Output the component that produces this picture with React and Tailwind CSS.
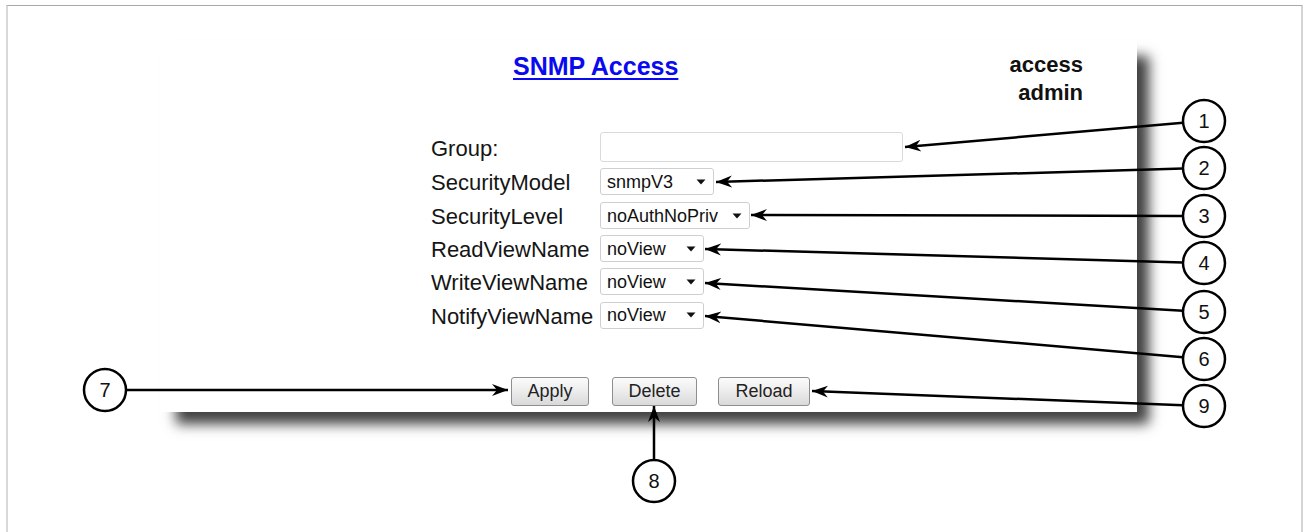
import React from "react";

const font = { fontFamily: '"Liberation Sans", Arial, sans-serif' };

function Select({ value, width }) {
  return (
    <div
      className={`flex items-center justify-between h-[27px] border border-[#cfcfcf] rounded-[3px] bg-white pl-[6px] pr-[6px] text-[18px] text-[#111] ${width}`}
    >
      <span className="leading-none">{value}</span>
      <svg width="10" height="6" viewBox="0 0 10 6" className="mr-[1px]">
        <path d="M0.5 0.5 L9.5 0.5 L5 5.5 Z" fill="#111" />
      </svg>
    </div>
  );
}

function Row({ label, h, children }) {
  return (
    <div className={`flex items-center ${h}`}>
      <div className="w-[169px] pt-[3px] text-[22px] leading-none text-[#151515]">{label}</div>
      {children}
    </div>
  );
}

function Btn({ children, w }) {
  return (
    <div
      className={`h-[29px] ${w} flex items-center justify-center rounded-[3px] border border-[#8e8e8e] bg-gradient-to-b from-[#fbfbfb] via-[#ececec] to-[#d9d9d9] text-[18px] text-[#222]`}
    >
      {children}
    </div>
  );
}

const callouts = [
  { n: 1, c: [1204, 121], t: [905, 147] },
  { n: 2, c: [1204, 168], t: [716, 182] },
  { n: 3, c: [1204, 216], t: [751, 215] },
  { n: 4, c: [1204, 263], t: [705, 249] },
  { n: 5, c: [1204, 312], t: [705, 283] },
  { n: 6, c: [1204, 359], t: [705, 316] },
  { n: 7, c: [105, 390], t: [508, 390] },
  { n: 8, c: [654, 481], t: [654, 406] },
  { n: 9, c: [1204, 406], t: [812, 391] },
];

function Callouts() {
  const r = 21;
  return (
    <svg className="absolute inset-0" width="1308" height="532" viewBox="0 0 1308 532">
      <defs>
        <marker
          id="ah"
          markerUnits="userSpaceOnUse"
          viewBox="0 -7 17 14"
          markerWidth="17"
          markerHeight="14"
          refX="16"
          refY="0"
          orient="auto"
        >
          <path d="M0,-6 L16,0 L0,6 L5,0 Z" fill="#000" />
        </marker>
      </defs>
      {callouts.map(({ n, c, t }) => {
        const dx = t[0] - c[0];
        const dy = t[1] - c[1];
        const len = Math.hypot(dx, dy);
        const sx = c[0] + (r * dx) / len;
        const sy = c[1] + (r * dy) / len;
        return (
          <g key={n}>
            <line
              x1={sx}
              y1={sy}
              x2={t[0]}
              y2={t[1]}
              stroke="#000"
              strokeWidth="2.5"
              markerEnd="url(#ah)"
            />
            <circle cx={c[0]} cy={c[1]} r={r} fill="#fff" stroke="#000" strokeWidth="2.5" />
            <text
              x={c[0]}
              y={c[1] + 7}
              textAnchor="middle"
              fontSize="20"
              fontFamily='"Liberation Sans", Arial, sans-serif'
              fill="#111"
            >
              {n}
            </text>
          </g>
        );
      })}
    </svg>
  );
}

export default function App() {
  return (
    <div className="relative w-[1308px] h-[532px] overflow-hidden bg-white" style={font}>
      <div className="pt-[5px] pl-[6px]">
        <div className="w-[1297px] h-[620px] border-t border-t-[#a8a8a8] border-l-2 border-l-[#d8d8d8] border-r-2 border-r-[#d4d4d4]">
          <div className="ml-[152px] mt-[34px] w-[977px] h-[372px] bg-white shadow-[14px_14px_12px_-2px_rgba(0,0,0,0.75)]">
            <div className="flex h-[90px]">
              <div className="ml-[353px] mt-[12px] text-[25px] leading-[29px] font-bold underline decoration-2 underline-offset-[3px] text-[#0a0af0]">
                SNMP Access
              </div>
              <div className="ml-auto mr-[54px] mt-[11px] text-right text-[22px] leading-[28px] font-bold text-[#111]">
                <div>access</div>
                <div>admin</div>
              </div>
            </div>
            <div className="pl-[271px]">
              <Row label="Group:" h="h-[34px]">
                <div className="w-[303px] h-[30px] border border-[#dadada] rounded-[3px] bg-white" />
              </Row>
              <Row label="SecurityModel" h="h-[35px]">
                <Select value="snmpV3" width="w-[114px]" />
              </Row>
              <Row label="SecurityLevel" h="h-[33px]">
                <Select value="noAuthNoPriv" width="w-[150px]" />
              </Row>
              <Row label="ReadViewName" h="h-[33px]">
                <Select value="noView" width="w-[104px]" />
              </Row>
              <Row label="WriteViewName" h="h-[33px]">
                <Select value="noView" width="w-[104px]" />
              </Row>
              <Row label="NotifyViewName" h="h-[34px]">
                <Select value="noView" width="w-[104px]" />
              </Row>
            </div>
            <div className="flex mt-[45px] pl-[351px]">
              <Btn w="w-[78px]">Apply</Btn>
              <div className="ml-[23px]">
                <Btn w="w-[85px]">Delete</Btn>
              </div>
              <div className="ml-[21px]">
                <Btn w="w-[92px]">Reload</Btn>
              </div>
            </div>
          </div>
        </div>
      </div>
      <Callouts />
    </div>
  );
}
